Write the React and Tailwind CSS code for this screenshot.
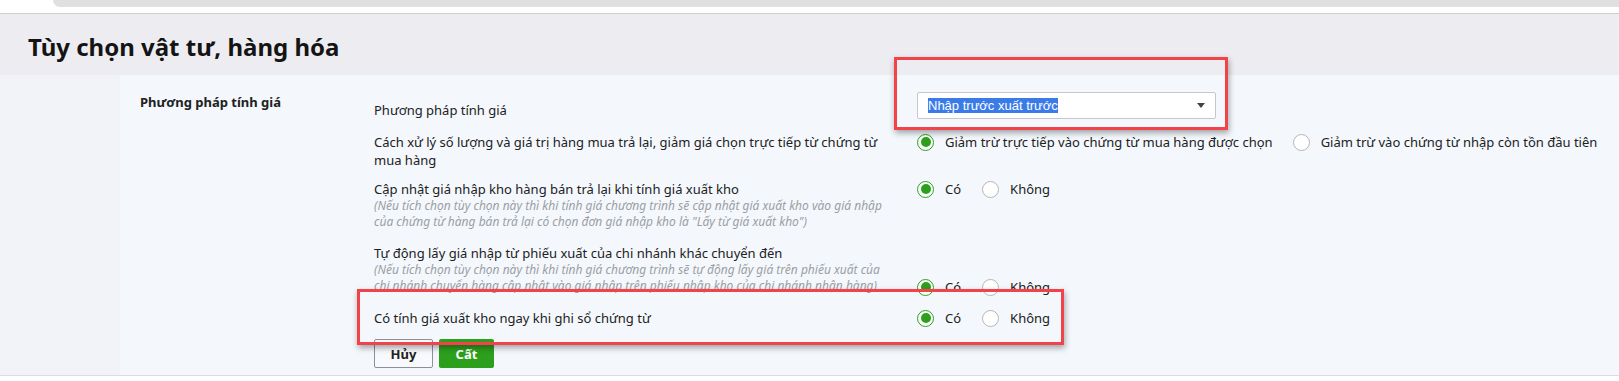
import React from "react";

function Radio({ checked }) {
  return checked ? (
    <span className="flex h-[17px] w-[17px] shrink-0 items-center justify-center rounded-full border-[1.5px] border-[#2ca01c] bg-white">
      <span className="h-[10px] w-[10px] rounded-full bg-[#2ca01c]" />
    </span>
  ) : (
    <span className="h-[17px] w-[17px] shrink-0 rounded-full border border-[#b5b5b5] bg-white" />
  );
}

function Option({ checked, children }) {
  return (
    <div className="flex h-[18px] items-center gap-[11px]">
      <Radio checked={checked} />
      <span className="whitespace-nowrap">{children}</span>
    </div>
  );
}

function YesNo() {
  return (
    <div className="flex items-center gap-[21px]">
      <Option checked>Có</Option>
      <Option>Không</Option>
    </div>
  );
}

export default function App() {
  return (
    <div className="relative h-[381px] w-full overflow-hidden bg-white font-['Noto_Sans',sans-serif] text-[13px] leading-[18px] text-[#212121]">
      {/* top strip */}
      <div className="h-[13px] bg-white">
        <div className="ml-[53px] h-[7px] rounded-bl-[7px] bg-[#e0e0e0]" />
      </div>
      <div className="h-px bg-[#cfcfd2]" />
      {/* header */}
      <div className="h-[61px] bg-[#ededf1] pl-[28px] pt-[17px]">
        <h1 className="text-[24px] font-bold leading-[32px] text-[#141414]">
          Tùy chọn vật tư, hàng hóa
        </h1>
      </div>
      {/* content */}
      <div className="flex h-[301px] border-b border-[#dadde2]">
        <div className="w-[120px] shrink-0 bg-[#f1f3f8]" />
        <div className="flex flex-1 bg-[#f4f8fd]">
          <div className="w-[254px] shrink-0 pl-[20px] pt-[18px] font-bold">
            Phương pháp tính giá
          </div>
          <div className="flex flex-col pt-[17px]">
            {/* row 1 */}
            <div className="flex items-start">
              <div className="w-[543px] shrink-0 pt-[9px]">Phương pháp tính giá</div>
              <div className="flex h-[27px] w-[299px] items-center justify-between rounded-[2px] border border-[#c4c7cc] bg-white pl-[10px] pr-[10px] font-['Liberation_Sans',Arial,sans-serif]">
                <span className="bg-[#3a7be8] leading-[15px] text-white">Nhập trước xuất trước</span>
                <span className="h-0 w-0 border-x-[4px] border-t-[5px] border-x-transparent border-t-[#444]" />
              </div>
            </div>
            {/* row 2 */}
            <div className="mt-[14px] flex items-start">
              <div className="w-[543px] shrink-0">
                Cách xử lý số lượng và giá trị hàng mua trả lại, giảm giá chọn trực tiếp từ chứng từ
                <br />
                mua hàng
              </div>
              <div className="flex items-center gap-[20px]">
                <Option checked>Giảm trừ trực tiếp vào chứng từ mua hàng được chọn</Option>
                <Option>Giảm trừ vào chứng từ nhập còn tồn đầu tiên</Option>
              </div>
            </div>
            {/* row 3 */}
            <div className="mt-[11px] flex items-start">
              <div className="w-[543px] shrink-0">
                <div>Cập nhật giá nhập kho hàng bán trả lại khi tính giá xuất kho</div>
                <div className="text-[12px] italic leading-[16px] text-[#9b9ea3]">
                  (Nếu tích chọn tùy chọn này thì khi tính giá chương trình sẽ cập nhật giá xuất kho vào giá nhập
                  <br />
                  của chứng từ hàng bán trả lại có chọn đơn giá nhập kho là "Lấy từ giá xuất kho")
                </div>
              </div>
              <YesNo />
            </div>
            {/* row 4 */}
            <div className="mt-[14px] flex items-end">
              <div className="w-[543px] shrink-0">
                <div>Tự động lấy giá nhập từ phiếu xuất của chi nhánh khác chuyển đến</div>
                <div className="text-[12px] italic leading-[16px] text-[#9b9ea3]">
                  (Nếu tích chọn tùy chọn này thì khi tính giá chương trình sẽ tự động lấy giá trên phiếu xuất của
                  <br />
                  chi nhánh chuyển hàng cập nhật vào giá nhập trên phiếu nhập kho của chi nhánh nhận hàng)
                </div>
              </div>
              <div className="mb-[-2px]">
                <YesNo />
              </div>
            </div>
            {/* row 5 */}
            <div className="mt-[15px] flex items-start">
              <div className="w-[543px] shrink-0">Có tính giá xuất kho ngay khi ghi sổ chứng từ</div>
              <YesNo />
            </div>
            {/* buttons */}
            <div className="mt-[12px] flex gap-[6px]">
              <button className="h-[29px] w-[59px] rounded-[2px] border border-[#8d9096] bg-[#f7f9fc] font-bold">
                Hủy
              </button>
              <button className="h-[29px] w-[55px] rounded-[2px] bg-[#2ca01c] font-bold text-white">
                Cất
              </button>
            </div>
          </div>
        </div>
      </div>

      {/* annotation overlays */}
      <div className="absolute left-[894px] top-[57px] h-[73px] w-[334px] border-[3px] border-[#f2434b] shadow-[1px_3px_6px_rgba(0,0,0,0.35)]" />
      <div className="absolute left-[357px] top-[289px] h-[56px] w-[707px] border-[3px] border-[#f2434b] shadow-[1px_3px_6px_rgba(0,0,0,0.35)]" />
    </div>
  );
}
